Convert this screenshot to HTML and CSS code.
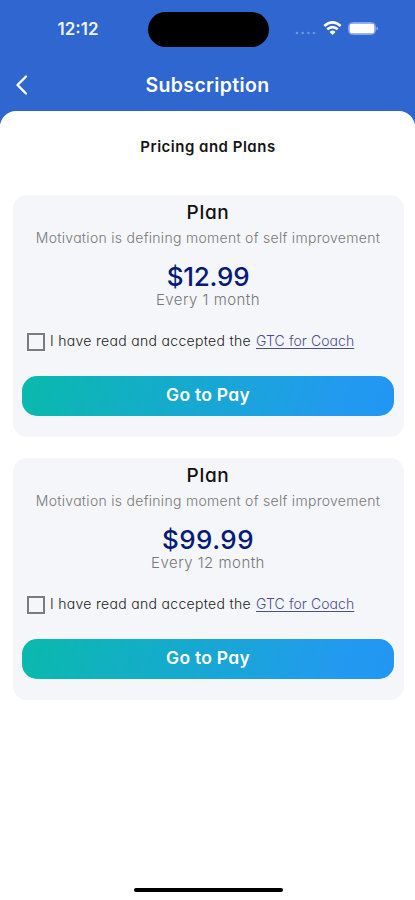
FILE: index.html
```html
<!DOCTYPE html>
<html lang="en">
<head>
<meta charset="utf-8">
<title>Subscription</title>
<link rel="stylesheet" href="styles.css">
</head>
<body>
<div class="phone">
  <header class="header">
    <div class="status">
      <span class="time">12:12</span>
      <span class="island"></span>
      <svg class="indicators" width="88" height="18" viewBox="0 0 88 18">
        <g fill="#6f93e0"><circle cx="3" cy="13" r="1.300"/><circle cx="8.700" cy="13" r="1.300"/><circle cx="14.400" cy="13" r="1.300"/><circle cx="20" cy="13" r="1.300"/></g>
        <g fill="none" stroke="#fff" stroke-width="2.600"><path d="M30.300 6Q38.500 -1.300 46.700 6"/><path d="M33.200 9.300Q38.500 4.800 43.800 9.300"/></g>
        <path d="M35.500 11.900Q38.500 9.300 41.500 11.900L38.500 15Z" fill="#fff"/>
        <rect x="54.500" y="2.500" width="27" height="12" rx="4" fill="none" stroke="#87a7e8"/>
        <rect x="55.500" y="3.500" width="25" height="10" rx="2.800" fill="#fff"/>
        <path d="M82.500 6.500Q86 8.500 82.500 10.500Z" fill="#87a7e8"/>
      </svg>
    </div>
    <div class="nav">
      <svg class="back" width="14" height="22" viewBox="0 0 14 22"><path d="M12 2.500L3.500 11L12 19.500" fill="none" stroke="#fff" stroke-width="2.400" stroke-linecap="round" stroke-linejoin="round"/></svg>
      <h1 class="title">Subscription</h1>
    </div>
  </header>
  <main class="sheet">
    <h2 class="heading">Pricing and Plans</h2>
    <section class="card">
      <h3 class="plan">Plan</h3>
      <p class="desc">Motivation is defining moment of self improvement</p>
      <p class="price">$12.99</p>
      <p class="period">Every 1 month</p>
      <div class="terms"><span class="box"></span><span class="accept">I have read and accepted the</span><a class="link">GTC for Coach</a></div>
      <button class="pay">Go to Pay</button>
    </section>
    <section class="card">
      <h3 class="plan">Plan</h3>
      <p class="desc">Motivation is defining moment of self improvement</p>
      <p class="price wide">$99.99</p>
      <p class="period">Every 12 month</p>
      <div class="terms"><span class="box"></span><span class="accept">I have read and accepted the</span><a class="link">GTC for Coach</a></div>
      <button class="pay">Go to Pay</button>
    </section>
    <div class="home"></div>
  </main>
</div>
</body>
</html>
```
FILE: styles.css
```css
* { box-sizing: border-box; margin: 0; padding: 0; }
body { font-family: Inter, sans-serif; font-feature-settings: "cv11"; background: #fff; }
.phone { width: 415px; height: 900px; background: linear-gradient(#2f66d0 0 124px, #fff 124px); display: flex; flex-direction: column; overflow: hidden; white-space: nowrap; }
.header { height: 111px; flex: none; color: #fff; }
.status { height: 58px; display: flex; align-items: center; }
.time { width: 147.5px; padding-left: 57.5px; font-size: 17px; font-weight: 600; color: #eff4ff; }
.island { width: 121px; height: 35px; border-radius: 18px; background: #000; }
.indicators { margin-left: 25px; }
.nav { height: 53px; display: grid; grid-template-columns: 28px 1fr 28px; align-items: center; }
.title { text-align: center; font-size: 19.5px; line-height: 30px; font-weight: 600; letter-spacing: 0.33px; }
.back { justify-self: end; }
.sheet { flex: 1; background: #fff; border-radius: 16px 16px 0 0; padding: 0 11.5px 0 12.5px; display: flex; flex-direction: column; text-align: center; }
.heading { height: 83.5px; padding-top: 24px; font-size: 15px; line-height: 24px; font-weight: 600; letter-spacing: 0.5px; color: #151515; }
.card { height: 242.5px; margin-bottom: 20.5px; background: #f4f6fa; border-radius: 14px; padding: 5px 9.5px 0; flex: none; }
.plan { font-size: 19px; line-height: 26px; font-weight: 500; letter-spacing: 0.7px; color: #111; }
.desc { margin-top: 1px; font-size: 14px; line-height: 22px; font-weight: 300; letter-spacing: 0.29px; color: #777; }
.price { margin-top: 11px; font-size: 26px; line-height: 34px; font-weight: 550; letter-spacing: -0.25px; color: #061a78; }
.price.wide { letter-spacing: 0.45px; }
.period { margin-top: -5px; font-size: 15px; line-height: 22px; font-weight: 300; letter-spacing: 0.47px; color: #777; }
.terms { height: 24px; margin-top: 17.5px; padding-left: 5px; display: flex; align-items: center; font-size: 14px; font-weight: 300; color: #222; }
.box { width: 18px; height: 18px; border: 2px solid #7b7b7b; margin: 3px 5px 0 0; }
.accept { width: 206px; text-align: left; letter-spacing: 0.31px; }
.link { color: #4c4e91; text-decoration: underline; text-underline-offset: 2px; letter-spacing: 0.07px; }
.pay { display: block; width: 100%; height: 40px; margin-top: 24px; padding-bottom: 3px; border: 0; border-radius: 15px; background: linear-gradient(105deg, #09baac, #229af0 85%, #2196f3); color: #fff; font: 600 17.5px Inter, sans-serif; letter-spacing: 0.25px; font-feature-settings: "cv11"; }
.home { width: 149px; height: 4px; border-radius: 2px; background: #000; margin: auto auto 8px 121px; flex: none; }
```
